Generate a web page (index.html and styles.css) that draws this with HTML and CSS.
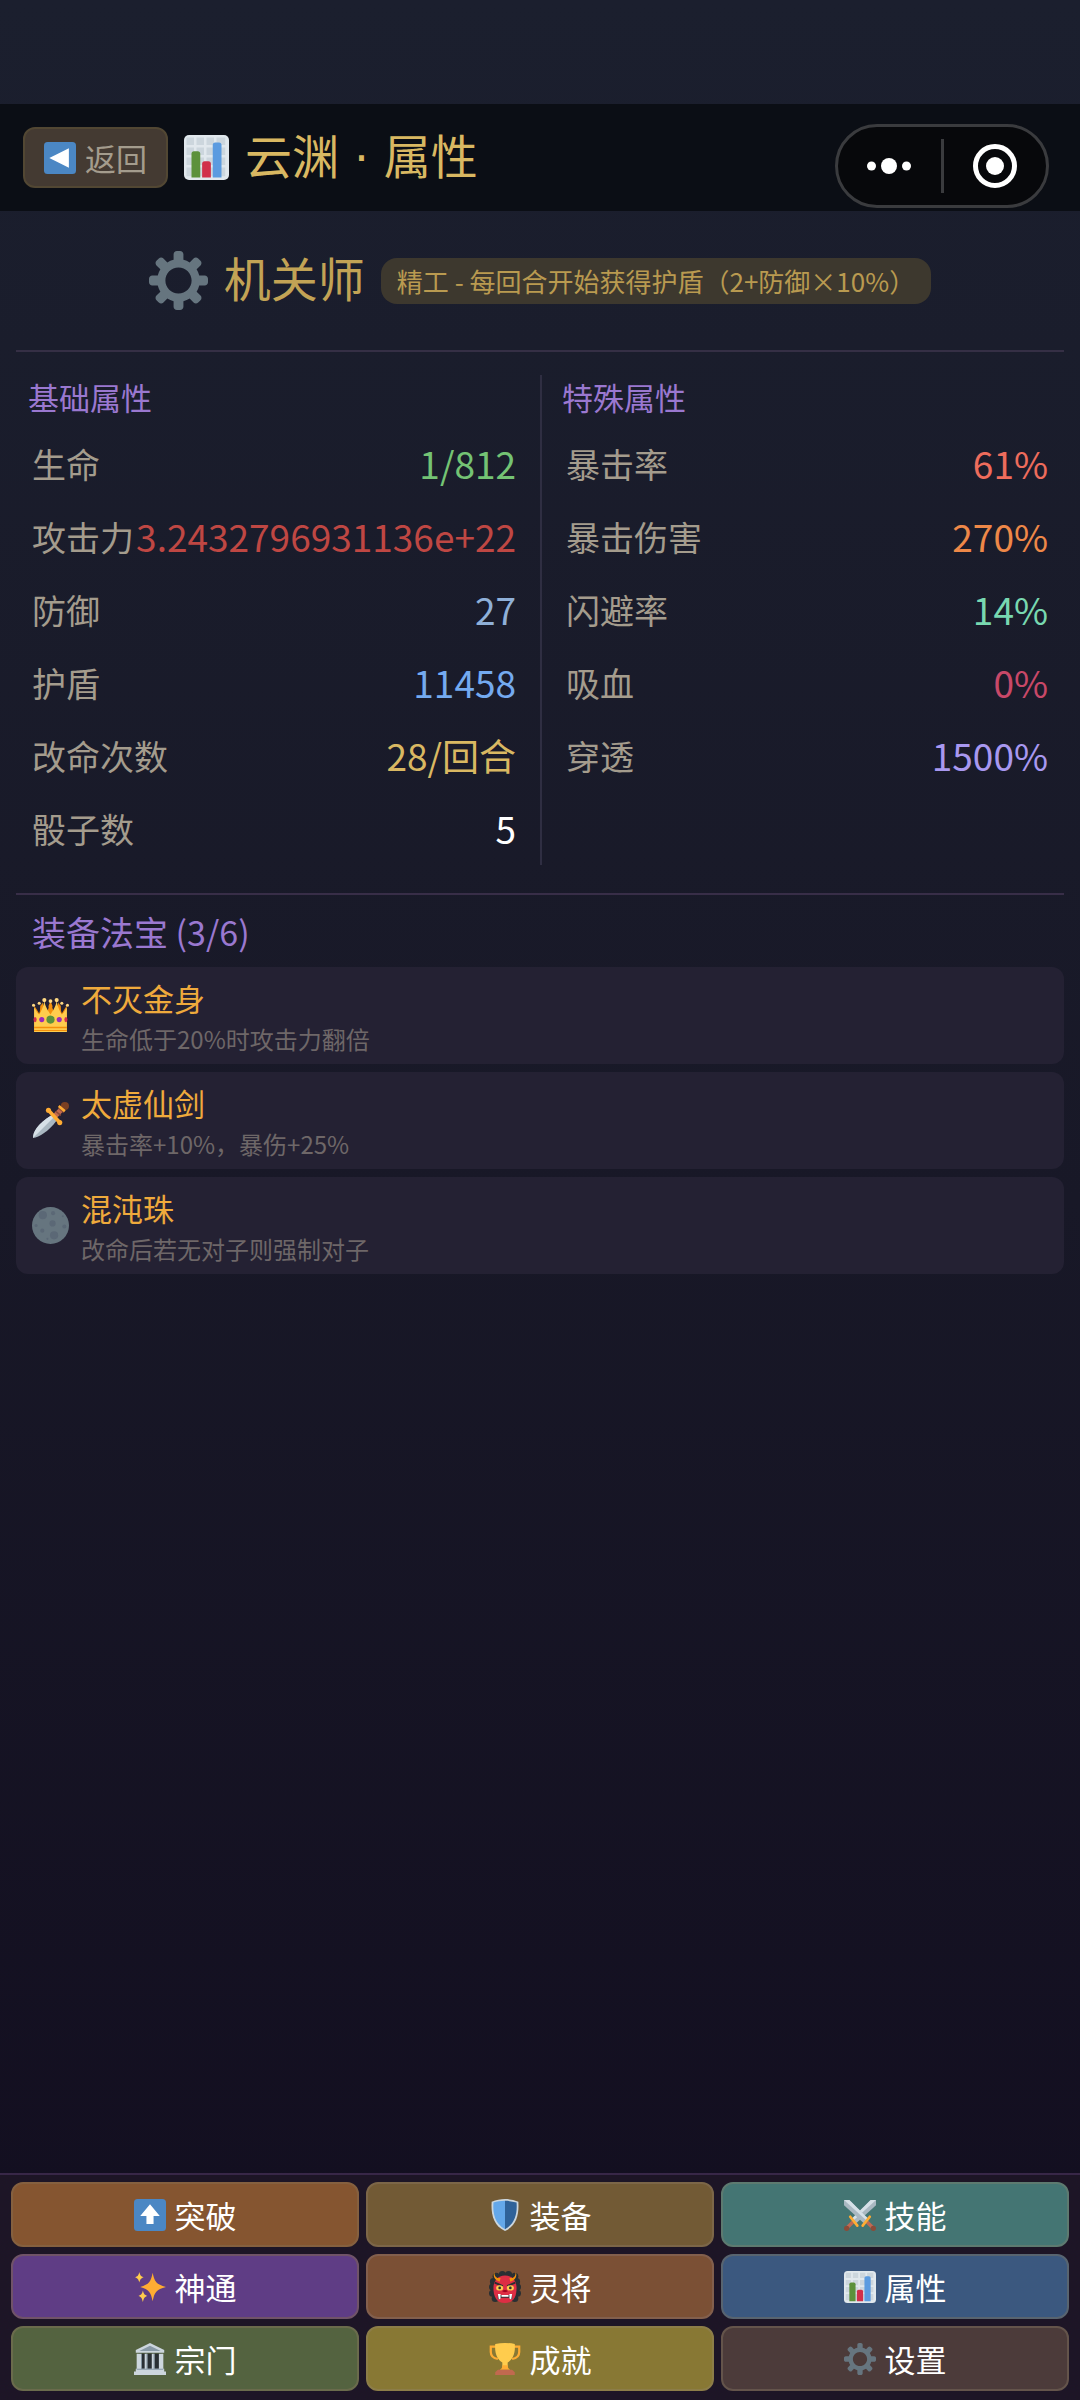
FILE: index.html
```html
<!DOCTYPE html>
<html lang="zh-CN">
<head>
  <meta charset="UTF-8" />
  <meta name="viewport" content="width=device-width, initial-scale=1.0" />
  <title>云渊 · 属性</title>
  <link rel="stylesheet" href="styles.css">
</head>
<body>
  <!-- Shared icons -->
  <svg class="sprite" aria-hidden="true">
    <symbol id="icon-chart" viewBox="0 0 36 36">
      <rect width="36" height="36" rx="4" fill="#e1e8ed"/>
      <path fill="#ccd6dd" d="M2 2h6v6H2zM10 2h6v6h-6zM18 2h6v6h-6zM26 2h7v6h-7zM2 10h6v6H2zM10 10h6v6h-6zM18 10h6v6h-6zM26 10h7v6h-7zM2 18h6v6H2zM10 18h6v6h-6zM18 18h6v6h-6zM26 18h7v6h-7zM2 26h6v7H2zM10 26h6v7h-6zM18 26h6v7h-6zM26 26h7v7h-7z"/>
      <path fill="#5c913b" d="M13 34H6V15a2 2 0 0 1 2-2h3a2 2 0 0 1 2 2z"/>
      <path fill="#d1304a" d="M21.500 34h-7V23a2 2 0 0 1 2-2h3a2 2 0 0 1 2 2z"/>
      <path fill="#5b9be0" d="M30 34h-7V8a2 2 0 0 1 2-2h3a2 2 0 0 1 2 2z"/>
    </symbol>
    <symbol id="icon-gear" viewBox="0 0 36 36">
      <path fill="#66757f" d="M34 15h-3.362c-.324-1.369-.864-2.651-1.582-3.814l2.379-2.379c.781-.781.781-2.048 0-2.829l-1.414-1.414c-.781-.781-2.047-.781-2.828 0l-2.379 2.379C23.650 6.225 22.369 5.686 21 5.362V2c0-1.104-.896-2-2-2h-2c-1.104 0-2 .896-2 2v3.362c-1.369.324-2.651.864-3.814 1.582L8.808 4.565c-.781-.781-2.048-.781-2.828 0L4.565 5.979c-.781.781-.781 2.048-.001 2.829l2.379 2.379C6.225 12.350 5.686 13.632 5.362 15H2c-1.104 0-2 .896-2 2v2c0 1.104.896 2 2 2h3.362c.324 1.368.864 2.650 1.582 3.813l-2.379 2.379c-.78.78-.78 2.048.001 2.829l1.414 1.414c.78.78 2.047.78 2.828 0l2.379-2.379c1.163.719 2.445 1.258 3.814 1.582V34c0 1.104.896 2 2 2h2c1.104 0 2-.896 2-2v-3.362c1.368-.324 2.650-.864 3.813-1.582l2.379 2.379c.781.781 2.047.781 2.828 0l1.414-1.414c.781-.781.781-2.048 0-2.829l-2.379-2.379c.719-1.163 1.258-2.445 1.582-3.814H34c1.104 0 2-.896 2-2v-2C36 15.896 35.104 15 34 15zM18 26c-4.418 0-8-3.582-8-8s3.582-8 8-8 8 3.582 8 8-3.582 8-8 8z"/>
    </symbol>
  </svg>

  <header class="topbar">
    <button class="back" type="button">
      <svg class="icon" viewBox="0 0 36 36" aria-hidden="true">
        <rect width="36" height="36" rx="4" fill="#4b87c4"/>
        <path fill="#fff" d="M6 18 28 7v22z"/>
      </svg>
      返回
    </button>
    <svg class="icon icon-title" aria-hidden="true"><use href="#icon-chart"/></svg>
    <h1>云渊 · 属性</h1>
  </header>

  <!-- Mini program capsule, sits over the top bar -->
  <div class="capsule">
    <button type="button" aria-label="更多">
      <svg class="dots" viewBox="0 0 44 16"><circle cx="4.500" cy="8" r="4.500"/><circle cx="22" cy="8" r="8"/><circle cx="39.500" cy="8" r="4.500"/></svg>
    </button>
    <span class="capsule-line"></span>
    <button type="button" aria-label="关闭">
      <svg class="target" viewBox="0 0 44 44"><circle class="ring" cx="22" cy="22" r="19.500"/><circle cx="22" cy="22" r="9"/></svg>
    </button>
  </div>

  <main>
    <section class="role">
      <svg class="icon icon-role" aria-hidden="true"><use href="#icon-gear"/></svg>
      <h2>机关师</h2>
      <span class="talent">精工 - 每回合开始获得护盾（2+防御×10%）</span>
    </section>

    <section class="stats">
      <div class="column">
        <h3>基础属性</h3>
        <dl>
          <div class="row"><dt>生命</dt><dd class="hp">1/812</dd></div>
          <div class="row"><dt>攻击力</dt><dd class="attack">3.2432796931136e+22</dd></div>
          <div class="row"><dt>防御</dt><dd class="defense">27</dd></div>
          <div class="row"><dt>护盾</dt><dd class="shield">11458</dd></div>
          <div class="row"><dt>改命次数</dt><dd class="reroll">28/回合</dd></div>
          <div class="row"><dt>骰子数</dt><dd class="dice">5</dd></div>
        </dl>
      </div>
      <div class="column">
        <h3>特殊属性</h3>
        <dl>
          <div class="row"><dt>暴击率</dt><dd class="crit">61%</dd></div>
          <div class="row"><dt>暴击伤害</dt><dd class="crit-damage">270%</dd></div>
          <div class="row"><dt>闪避率</dt><dd class="dodge">14%</dd></div>
          <div class="row"><dt>吸血</dt><dd class="leech">0%</dd></div>
          <div class="row"><dt>穿透</dt><dd class="pierce">1500%</dd></div>
        </dl>
      </div>
    </section>

    <section class="gear">
      <h3>装备法宝 (3/6)</h3>
      <ul>
        <li>
          <svg class="icon icon-item" viewBox="0 0 36 36" aria-hidden="true">
            <path fill="#f4900c" d="M5 26 2 8l5 8 3-11 4 12 4-12 4 12 4-12 3 11 5-8-3 18z"/>
            <path fill="#ffcc4d" d="M2 34V10c2 3 3 6 5 7 2-3 4-7 5-13 1 6 4 10 6 13 2-3 5-7 6-13 1 6 3 10 5 13 2-1 3-4 5-7v24z"/>
            <path fill="#f4900c" d="M2 29h32v1.500H2zM2 32h32v1H2zM16 9l2-5 2 5-2 6zM8 9l1-2 1 2-2 6zM28 9l-1-2-1 2 2 6z"/>
            <circle cx="18" cy="4" r="1.800" fill="#ffd983"/><circle cx="12" cy="3" r="2" fill="#ffd983"/><circle cx="24" cy="3" r="2" fill="#ffd983"/><circle cx="7" cy="6" r="1.500" fill="#ffd983"/><circle cx="29" cy="6" r="1.500" fill="#ffd983"/><circle cx="1.500" cy="8" r="1.500" fill="#ffd983"/><circle cx="34.500" cy="8" r="1.500" fill="#ffd983"/>
            <circle cx="18" cy="22" r="4" fill="#5c913b"/>
            <circle cx="9.500" cy="22" r="2.500" fill="#9a2bb8"/><circle cx="26.500" cy="22" r="2.500" fill="#9a2bb8"/>
            <ellipse cx="3" cy="22" rx="1.500" ry="2.500" fill="#d1304a"/><ellipse cx="33" cy="22" rx="1.500" ry="2.500" fill="#d1304a"/>
          </svg>
          <div>
            <h4>不灭金身</h4>
            <p>生命低于20%时攻击力翻倍</p>
          </div>
        </li>
        <li>
          <svg class="icon icon-item" viewBox="0 0 36 36" aria-hidden="true">
            <path fill="#aab8c2" d="M1 35c0-6 4-13 18-22l5 5C16 29 7 34 1 35z"/>
            <path fill="#d6e0e7" d="M1 35c0-6 4-13 18-22l2 2z"/>
            <path fill="none" stroke="#c1694f" stroke-width="5" d="m22 14 8-8"/>
            <path fill="none" stroke="#8a4b38" stroke-width="1.500" d="m23 9 5 4M26 6l5 4"/>
            <circle cx="32" cy="4" r="4" fill="#7b3f22"/>
            <path fill="none" stroke="#ffac33" stroke-width="2.500" d="m26 4 6 5"/>
            <path fill="none" stroke="#ffac33" stroke-width="3.500" d="m16 8 11 12"/>
            <circle cx="16" cy="8" r="2.500" fill="#ffac33"/><circle cx="27" cy="20" r="2.500" fill="#ffac33"/>
          </svg>
          <div>
            <h4>太虚仙剑</h4>
            <p>暴击率+10%，暴伤+25%</p>
          </div>
        </li>
        <li>
          <svg class="icon icon-item" viewBox="0 0 36 36" aria-hidden="true">
            <circle cx="18" cy="18" r="18" fill="#66757f"/>
            <g fill="#5b6876"><circle cx="10.500" cy="8" r="4"/><circle cx="20.500" cy="6" r="2"/><circle cx="20" cy="16" r="3"/><circle cx="31.500" cy="19" r="2"/><circle cx="21.500" cy="27.500" r="4"/><circle cx="10" cy="23" r="2"/><circle cx="30" cy="9" r="1"/><circle cx="4" cy="18" r="1.500"/><circle cx="15" cy="31" r="1"/></g>
          </svg>
          <div>
            <h4>混沌珠</h4>
            <p>改命后若无对子则强制对子</p>
          </div>
        </li>
      </ul>
    </section>
  </main>

  <nav class="tabs">
    <button class="tab tab-break" type="button">
      <svg class="icon" viewBox="0 0 36 36" aria-hidden="true">
        <rect width="36" height="36" rx="4" fill="#4b87c4"/>
        <path fill="#fff" d="M18 6 29 19h-7v9h-8v-9H7z"/>
      </svg>
      突破
    </button>
    <button class="tab tab-equip" type="button">
      <svg class="icon" viewBox="0 0 36 36" aria-hidden="true">
        <path fill="#ccd6dd" d="M18 0c5 0 10 1 15 3 1 14-2 27-15 33C5 30 2 17 3 3 8 1 13 0 18 0z"/>
        <path fill="#64a8ea" d="M18 2C13 2 9 3 5 4c-1 13 2 24 13 30z"/>
        <path fill="#2f6299" d="M18 2c5 0 9 1 13 2 1 13-2 24-13 30z"/>
      </svg>
      装备
    </button>
    <button class="tab tab-skill" type="button">
      <svg class="icon" viewBox="0 0 36 36" aria-hidden="true">
        <path fill="#aab8c2" d="M36 1v6L14 27l-5-5L30 1z"/>
        <path fill="#d6e0e7" d="M36 1 11 24l-2-2L30 1z"/>
        <path fill="#aab8c2" d="M0 1v6l22 20 5-5L6 1z"/>
        <path fill="#d6e0e7" d="m0 1 25 23 2-2L6 1z"/>
        <path fill="none" stroke="#bf6952" stroke-width="4" d="m10 26-7 7M26 26l7 7"/>
        <path fill="none" stroke="#ffac33" stroke-width="3" stroke-linecap="round" d="m7 20 8 10M29 20l-8 10"/>
        <circle cx="3" cy="33" r="3" fill="#8a4b38"/><circle cx="33" cy="33" r="3" fill="#8a4b38"/>
      </svg>
      技能
    </button>
    <button class="tab tab-magic" type="button">
      <svg class="icon" viewBox="0 0 36 36" aria-hidden="true">
        <path fill="#ffac33" d="M21 2c2 10 4 13 15 16-11 3-13 6-15 16-2-10-4-13-14-16C17 15 19 12 21 2z"/>
        <path fill="#ffcc4d" d="M6 1c1 4 2 5 5 6-3 1-4 2-5 6-1-4-2-5-5-6 3-1 4-2 5-6zM10 22c1 4 2 5 5 6-3 1-4 2-5 7-1-5-2-6-5-7 3-1 4-2 5-6z"/>
      </svg>
      神通
    </button>
    <button class="tab tab-general" type="button">
      <svg class="icon" viewBox="0 0 36 36" aria-hidden="true">
        <g fill="#292f33"><circle cx="15" cy="4" r="4"/><circle cx="22" cy="4" r="4"/><circle cx="8" cy="6" r="4"/><circle cx="29" cy="6" r="4"/><circle cx="5" cy="12" r="4"/><circle cx="31" cy="12" r="4"/><circle cx="4" cy="18" r="4"/><circle cx="32" cy="18" r="4"/><circle cx="4" cy="25" r="4"/><circle cx="32" cy="25" r="4"/><circle cx="7" cy="31" r="4"/><circle cx="29" cy="31" r="4"/></g>
        <path fill="#dd2e44" d="M18 5c8 0 13 6 13 14 0 9-3 17-13 17S5 28 5 19C5 11 10 5 18 5z"/>
        <path fill="#f4900c" d="M6 1c0 5 2 7 7 7l-1 4C6 10 4 6 6 1zM30 1c0 5-2 7-7 7l1 4c6-2 8-6 6-11z"/>
        <path fill="#292f33" d="m7 12 9 4-1 2-9-4zM29 12l-9 4 1 2 9-4z"/>
        <ellipse cx="12" cy="19" rx="4" ry="3" fill="#ffcc4d"/><ellipse cx="24" cy="19" rx="4" ry="3" fill="#ffcc4d"/>
        <circle cx="12" cy="19" r="1.500" fill="#292f33"/><circle cx="24" cy="19" r="1.500" fill="#292f33"/>
        <path fill="#a0041e" d="M15 23c1-2 5-2 6 0l-3 1z"/>
        <path fill="#292f33" d="M10 27h16v5l-4-2h-8l-4 2z"/>
        <path fill="#fff" d="M10 26h3v5l-2 1zM26 26h-3v5l2 1zM14 27h8v2h-8z"/>
      </svg>
      灵将
    </button>
    <button class="tab tab-stats" type="button">
      <svg class="icon" aria-hidden="true"><use href="#icon-chart"/></svg>
      属性
    </button>
    <button class="tab tab-sect" type="button">
      <svg class="icon" viewBox="0 0 36 36" aria-hidden="true">
        <path fill="#292f33" d="M5 12h26v18H5z"/>
        <path fill="#ccd6dd" d="M18 0 2 8v3h32V8zM3 12h5v17H3zM12 12h3v17h-3zM20 12h3v17h-3zM28 12h5v17h-5zM2 29h32v3H2zM0 32h36v4H0z"/>
        <path fill="#8899a6" d="M18 3 6 9h24zM3 29h30v1H3zM8 12h1v17H8zM14 12h1v17h-1zM22 12h1v17h-1z"/>
      </svg>
      宗门
    </button>
    <button class="tab tab-award" type="button">
      <svg class="icon" viewBox="0 0 36 36" aria-hidden="true">
        <path fill="none" stroke="#ffac33" stroke-width="2.500" d="M9 4H2v6c0 4 3 7 8 8M27 4h7v6c0 4-3 7-8 8"/>
        <path fill="#ffcc4d" d="M7 1q11-2 22 0c1 12-3 18-8 21v6h-6v-6C10 19 6 13 7 1z"/>
        <path fill="#ffac33" d="M15 25h6c0 3 1 4 3 5H12c2-1 3-2 3-5z"/>
        <path fill="#c1694f" d="M10 30h16l3 3v3H7v-3z"/>
      </svg>
      成就
    </button>
    <button class="tab tab-settings" type="button">
      <svg class="icon" aria-hidden="true"><use href="#icon-gear"/></svg>
      设置
    </button>
  </nav>
</body>
</html>
```

FILE: styles.css
```css
/* Basic Reset */
* {
  margin: 0;
  padding: 0;
  box-sizing: border-box;
}
body {
  display: flex;
  flex-direction: column;
  min-height: 100vh;
  padding-top: 104px;
  font-family: "Noto Sans CJK SC", "Noto Sans", sans-serif;
  background: linear-gradient(#1b1f2e, #181827 50%, #120d1f);
  color: #a49c8d;
}
h1, h2, h3, h4 {
  font-weight: 400;
}
h1, h2, button {
  font-family: "DejaVu Sans", "Noto Sans CJK SC", sans-serif;
}
button {
  cursor: pointer;
}
ul {
  list-style: none;
}
.sprite {
  display: none;
}
.icon {
  flex: none;
  width: 32px;
  height: 32px;
}

/* Top bar */
.topbar {
  display: flex;
  align-items: center;
  height: 107px;
  padding: 0 23px;
  background-color: #0b0e15;
}
.back {
  display: flex;
  align-items: center;
  gap: 9px;
  height: 61px;
  padding: 0 19px;
  font-size: 31px;
  background-color: #443a32;
  color: #a49c8d;
  border: 2px solid #524733;
  border-radius: 12px;
}
.icon-title {
  width: 45px;
  height: 45px;
  margin: 0 16px;
}
.topbar h1 {
  font-size: 47px;
  line-height: 64px;
  color: #d9b862;
}

/* Capsule */
.capsule {
  position: absolute;
  top: 124px;
  right: 31px;
  display: flex;
  align-items: center;
  width: 214px;
  height: 84px;
  background-color: #07080b;
  border: 3px solid #3a3b3e;
  border-radius: 42px;
}
.capsule button {
  display: flex;
  flex: 1;
  justify-content: center;
  background: none;
  border: none;
}
.capsule svg {
  fill: #fff;
}
.capsule-line {
  width: 3px;
  height: 54px;
  background-color: #3a3b3e;
}
.dots {
  width: 44px;
  height: 16px;
}
.target {
  width: 44px;
  height: 44px;
}
.target .ring {
  fill: none;
  stroke: #fff;
  stroke-width: 5px;
}

main {
  flex: 1;
  padding: 0 16px;
}

/* Role */
.role {
  display: flex;
  align-items: center;
  justify-content: center;
  height: 141px;
  border-bottom: 2px solid #352f45;
}
.icon-role {
  width: 59px;
  height: 59px;
  margin-right: 16px;
}
.role h2 {
  margin-right: 16px;
  font-size: 47px;
  line-height: 64px;
  color: #c2a355;
}
.talent {
  padding: 0 16px;
  font-size: 26px;
  line-height: 46px;
  background-color: #3d382e;
  color: #b99a50;
  border-radius: 16px;
}

/* Stats */
.stats {
  display: grid;
  grid-template-columns: 1fr 1fr;
  padding: 23px 0 28px;
  border-bottom: 2px solid #382e48;
}
.column {
  padding: 0 20px 0 12px;
}
.column + .column {
  padding: 0 12px 0 20px;
  border-left: 2px solid #2f2e42;
}
.column h3 {
  margin-bottom: 8px;
  font-size: 31px;
  line-height: 44px;
  color: #9a78d0;
}
.row {
  display: flex;
  align-items: center;
  justify-content: space-between;
  padding: 0 4px;
  line-height: 73px;
}
.row dt {
  font-size: 34px;
}
.row dd {
  font-size: 37px;
}
.hp { color: #74c374; }
.attack { color: #bf4743; }
.defense { color: #8fb0d8; }
.shield { color: #74aaf0; }
.reroll { color: #d9b862; }
.dice { color: #fff; }
.crit { color: #ee6c5c; }
.crit-damage { color: #ee8848; }
.dodge { color: #78d8b0; }
.leech { color: #c84868; }
.pierce { color: #a898f0; }

/* Equipped treasures */
.gear h3 {
  padding: 11px 16px 9px;
  font-size: 34px;
  line-height: 52px;
  color: #9a78d0;
}
.gear ul {
  display: flex;
  flex-direction: column;
  gap: 8px;
}
.gear li {
  display: flex;
  align-items: center;
  gap: 12px;
  padding: 8px 16px;
  background-color: #242133;
  border-radius: 12px;
}
.icon-item {
  width: 37px;
  height: 37px;
}
.gear h4 {
  font-size: 31px;
  line-height: 46px;
  color: #efaa3c;
}
.gear p {
  font-size: 24px;
  line-height: 35px;
  color: #6e6768;
}

/* Bottom tabs */
.tabs {
  display: grid;
  grid-template-columns: repeat(3, 1fr);
  gap: 7px;
  padding: 7px 11px 9px;
  background-color: #1d1526;
  border-top: 2px solid #382748;
}
.tab {
  display: flex;
  align-items: center;
  justify-content: center;
  gap: 9px;
  height: 65px;
  font-size: 31px;
  color: #fff;
  border: 2px solid #6e5d5a;
  border-radius: 12px;
}
.tab-break { background-color: #855530; border-color: #85603f; }
.tab-equip { background-color: #725a35; border-color: #7c6648; }
.tab-skill { background-color: #447573; border-color: #5d7a70; }
.tab-magic { background-color: #5f3d85; border-color: #705368; }
.tab-general { background-color: #7b5035; border-color: #825f4d; }
.tab-stats { background-color: #3b587f; border-color: #586470; }
.tab-sect { background-color: #546340; border-color: #6a6b4c; }
.tab-award { background-color: #887834; border-color: #8c7d48; }
.tab-settings { background-color: #4c3b3a; border-color: #64544b; }
```
